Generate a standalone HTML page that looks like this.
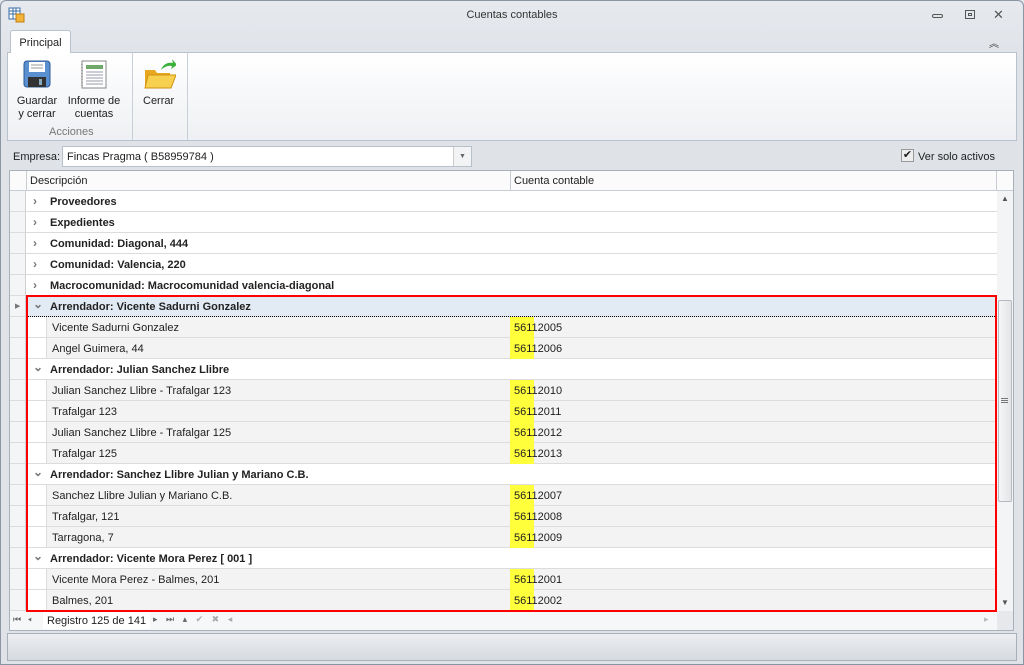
<!DOCTYPE html>
<html><head><meta charset="utf-8"><style>
*{margin:0;padding:0;box-sizing:border-box}
body{width:1024px;height:665px;overflow:hidden;background:#e4e8ed;font-family:"Liberation Sans",Tahoma,sans-serif;font-size:11px;color:#1e1e1e;position:relative}
.a{position:absolute;white-space:nowrap}
.row{position:absolute;left:26px;width:971px;height:21px;border-bottom:1px solid #dcdcdc;background:#fff}
.row .t{position:absolute;top:5px;white-space:nowrap}
.g .t{left:24px;font-weight:bold;color:#222}
.chev{position:absolute;left:7px;top:3px;color:#777;font-size:12px;font-weight:bold}
.d{background:#fff}
.d .bg{position:absolute;left:20px;top:0;right:0;bottom:0;background:#f3f3f3;border-left:1px solid #dcdcdc}
.d .t{left:26px}
.d .c{position:absolute;left:484px;top:0;height:21px;width:24px;background:#ffff3c}
.d .n{position:absolute;left:488px;top:5px}
.ind{position:absolute;left:10px;width:16px;height:21px;border-bottom:1px solid #dcdcdc;border-right:1px solid #d0d0d0;background:#f4f5f7}
</style></head><body>
<div class="a" style="left:0;top:0;width:1024px;height:665px;border:1px solid #8a96a4;border-radius:6px 6px 0 0;background:linear-gradient(#e6e9ee,#dfe3e8 60px)"></div>
<div class="a" style="left:0;top:9px;width:1024px;text-align:center;font-size:11px;color:#333">Cuentas contables</div>
<svg class="a" style="left:8px;top:7px" width="17" height="16"><rect x="1" y="1" width="11" height="11" fill="#fff" stroke="#3a6ea5"/><path d="M1 4h11M1 7h11M5 1v11M8 1v11" stroke="#3a6ea5"/><rect x="8" y="7" width="8" height="8" fill="#f3b43c" stroke="#c07c10"/></svg>
<div class="a" style="left:932px;top:14px;width:11px;height:4px;border:1px solid #555;border-radius:2px"></div>
<div class="a" style="left:965px;top:10px;width:10px;height:9px;border:1px solid #555"><div style="margin:2px;height:3px;border:1px solid #555"></div></div>
<div class="a" style="left:993px;top:7px;font-size:13px;color:#555">✕</div>
<div class="a" style="left:989px;top:35px;font-size:10px;color:#444">︽</div>
<div class="a" style="left:10px;top:30px;width:61px;height:23px;background:#fff;border:1px solid #b8c2ce;border-bottom:none;border-radius:3px 3px 0 0;text-align:center;padding-top:6px;z-index:2">Principal</div>
<div class="a" style="left:7px;top:52px;width:1010px;height:89px;border:1px solid #b8c2ce;background:linear-gradient(#fff,#eef0f3)"></div>
<div class="a" style="left:132px;top:53px;width:1px;height:87px;background:#c8cfd8"></div>
<div class="a" style="left:187px;top:53px;width:1px;height:87px;background:#c8cfd8"></div>
<svg class="a" style="left:23px;top:60px" width="28" height="28"><rect x="1" y="1" width="26" height="26" rx="3" fill="#5a8fd0" stroke="#2c5a98"/><rect x="6" y="2" width="16" height="10" fill="#fff"/><path d="M8 5h12M8 8h12" stroke="#999"/><rect x="5" y="17" width="18" height="10" fill="#333"/><rect x="16" y="19" width="3" height="6" fill="#8ab"/></svg>
<svg class="a" style="left:80px;top:60px" width="28" height="29"><rect x="2" y="1" width="24" height="27" fill="#fff" stroke="#888"/><rect x="6" y="5" width="17" height="4" fill="#6fa86a"/><path d="M6 12h17M6 15h17M6 18h17M6 21h17M6 24h17" stroke="#99a"/><path d="M2 4v22" stroke="#555" stroke-dasharray="1 2"/></svg>
<svg class="a" style="left:143px;top:58px" width="33" height="32"><path d="M2 12h10l2 3h13v14H2z" fill="#e8a820"/><path d="M5 17h28l-5 13H2z" fill="#f8d050" stroke="#d09010"/><path d="M18 12c2-6 7-8 12-7l-1-4 5 6-6 4 1-3c-4-1-8 1-11 4z" fill="#3bb03b"/></svg>
<div class="a" style="left:14px;top:95px;width:46px;text-align:center;line-height:13px">Guardar<br>y cerrar</div>
<div class="a" style="left:64px;top:95px;width:60px;text-align:center;line-height:13px">Informe de<br>cuentas</div>
<div class="a" style="left:143px;top:95px">Cerrar</div>
<div class="a" style="left:49px;top:126px;color:#777">Acciones</div>
<div class="a" style="left:13px;top:151px">Empresa:</div>
<div class="a" style="left:62px;top:146px;width:410px;height:21px;border:1px solid #b8c0ca;background:#fff;padding:4px 4px">Fincas Pragma ( B58959784 )</div>
<div class="a" style="left:453px;top:147px;width:18px;height:19px;border-left:1px solid #ccc;background:#f2f3f5;color:#666;font-size:7px;text-align:center;padding-top:6px">▼</div>
<div class="a" style="left:901px;top:149px;width:13px;height:13px;border:1px solid #999;background:#eee;font-size:11px;line-height:11px;text-align:center">✔</div>
<div class="a" style="left:918px;top:151px">Ver solo activos</div>
<div class="a" style="left:9px;top:170px;width:1005px;height:461px;border:1px solid #a8b0ba;background:#fff"></div>
<div class="a" style="left:10px;top:171px;width:1003px;height:20px;background:#fbfbfc;border-bottom:1px solid #c8cdd4"></div>
<div class="a" style="left:26px;top:171px;width:1px;height:20px;background:#c8cdd4"></div>
<div class="a" style="left:510px;top:171px;width:1px;height:20px;background:#c8cdd4"></div>
<div class="a" style="left:996px;top:171px;width:1px;height:20px;background:#c8cdd4"></div>
<div class="a" style="left:30px;top:175px">Descripción</div>
<div class="a" style="left:514px;top:175px">Cuenta contable</div>
<div id="rows"></div>
<div class="a" style="left:997px;top:191px;width:16px;height:420px;background:#f3f4f6"></div>
<div class="a" style="left:1001px;top:194px;font-size:8px;color:#555">▲</div>
<div class="a" style="left:998px;top:300px;width:14px;height:202px;border:1px solid #b4bac2;background:linear-gradient(90deg,#f6f6f7,#e2e4e7);border-radius:2px"></div>
<div class="a" style="left:1001px;top:398px;width:7px;height:5px;border-top:1px solid #777;border-bottom:1px solid #777"><div style="margin-top:1px;border-top:1px solid #777"></div></div>
<div class="a" style="left:1001px;top:598px;font-size:8px;color:#555">▼</div>
<div class="a" style="left:10px;top:611px;width:987px;height:19px;background:#f6f7f8"></div>
<div class="a" style="left:13px;top:614px;font-size:9px;color:#666;letter-spacing:2px">⏮ ◂</div>
<div class="a" style="left:43px;top:612px;width:107px;height:17px;background:#fff;padding:3px 4px;font-size:11px">Registro 125 de 141</div>
<div class="a" style="left:153px;top:614px;font-size:9px;color:#666;letter-spacing:3px">▸ ⏭ ▴ <span style="color:#aaa">✔ ✖ ◂</span></div>
<div class="a" style="left:984px;top:614px;font-size:9px;color:#bbb">▸</div>
<div class="a" style="left:997px;top:611px;width:16px;height:19px;background:#e6e8eb"></div>
<div class="a" style="left:7px;top:633px;width:1010px;height:28px;border:1px solid #a8b0ba;background:linear-gradient(#eceef1,#d6d9de)"></div>
<div class="a" style="left:26px;top:295px;width:971px;height:317px;border:2px solid #f00;z-index:5"></div>
<script>
var R=[["g","Proveedores",0],["g","Expedientes",0],["g","Comunidad: Diagonal, 444",0],["g","Comunidad: Valencia, 220",0],["g","Macrocomunidad: Macrocomunidad valencia-diagonal",0],
["g","Arrendador: Vicente Sadurni Gonzalez",1],["d","Vicente Sadurni Gonzalez","12005"],["d","Angel Guimera, 44","12006"],
["g","Arrendador: Julian Sanchez Llibre",1],["d","Julian Sanchez Llibre - Trafalgar 123","12010"],["d","Trafalgar 123","12011"],["d","Julian Sanchez Llibre - Trafalgar 125","12012"],["d","Trafalgar 125","12013"],
["g","Arrendador: Sanchez Llibre Julian y Mariano C.B.",1],["d","Sanchez Llibre Julian y Mariano C.B.","12007"],["d","Trafalgar, 121","12008"],["d","Tarragona, 7","12009"],
["g","Arrendador: Vicente Mora Perez [ 001 ]",1],["d","Vicente Mora Perez - Balmes, 201","12001"],["d","Balmes, 201","12002"]];
var h="";R.forEach(function(r,i){var y=191+i*21;
h+='<div class="ind" style="top:'+y+'px">'+(i==5?'<span style="position:absolute;left:5px;top:6px;font-size:7px;color:#777">▶</span>':'')+'</div>';
if(r[0]=="g"){var foc=i==5;h+='<div class="row g" style="top:'+y+'px;'+(foc?'background:#e2eaf4;border-bottom:1px dotted #000':'')+'"><span class="chev" style="'+(r[2]?'top:1px':'')+'">'+(r[2]?'⌄':'›')+'</span><span class="t">'+r[1]+'</span></div>';}
else h+='<div class="row d" style="top:'+y+'px"><div class="bg"></div><span class="t">'+r[1]+'</span><div class="c"></div><span class="n">561'+r[2]+'</span></div>';});
document.getElementById("rows").innerHTML=h;
</script>
</body></html>
